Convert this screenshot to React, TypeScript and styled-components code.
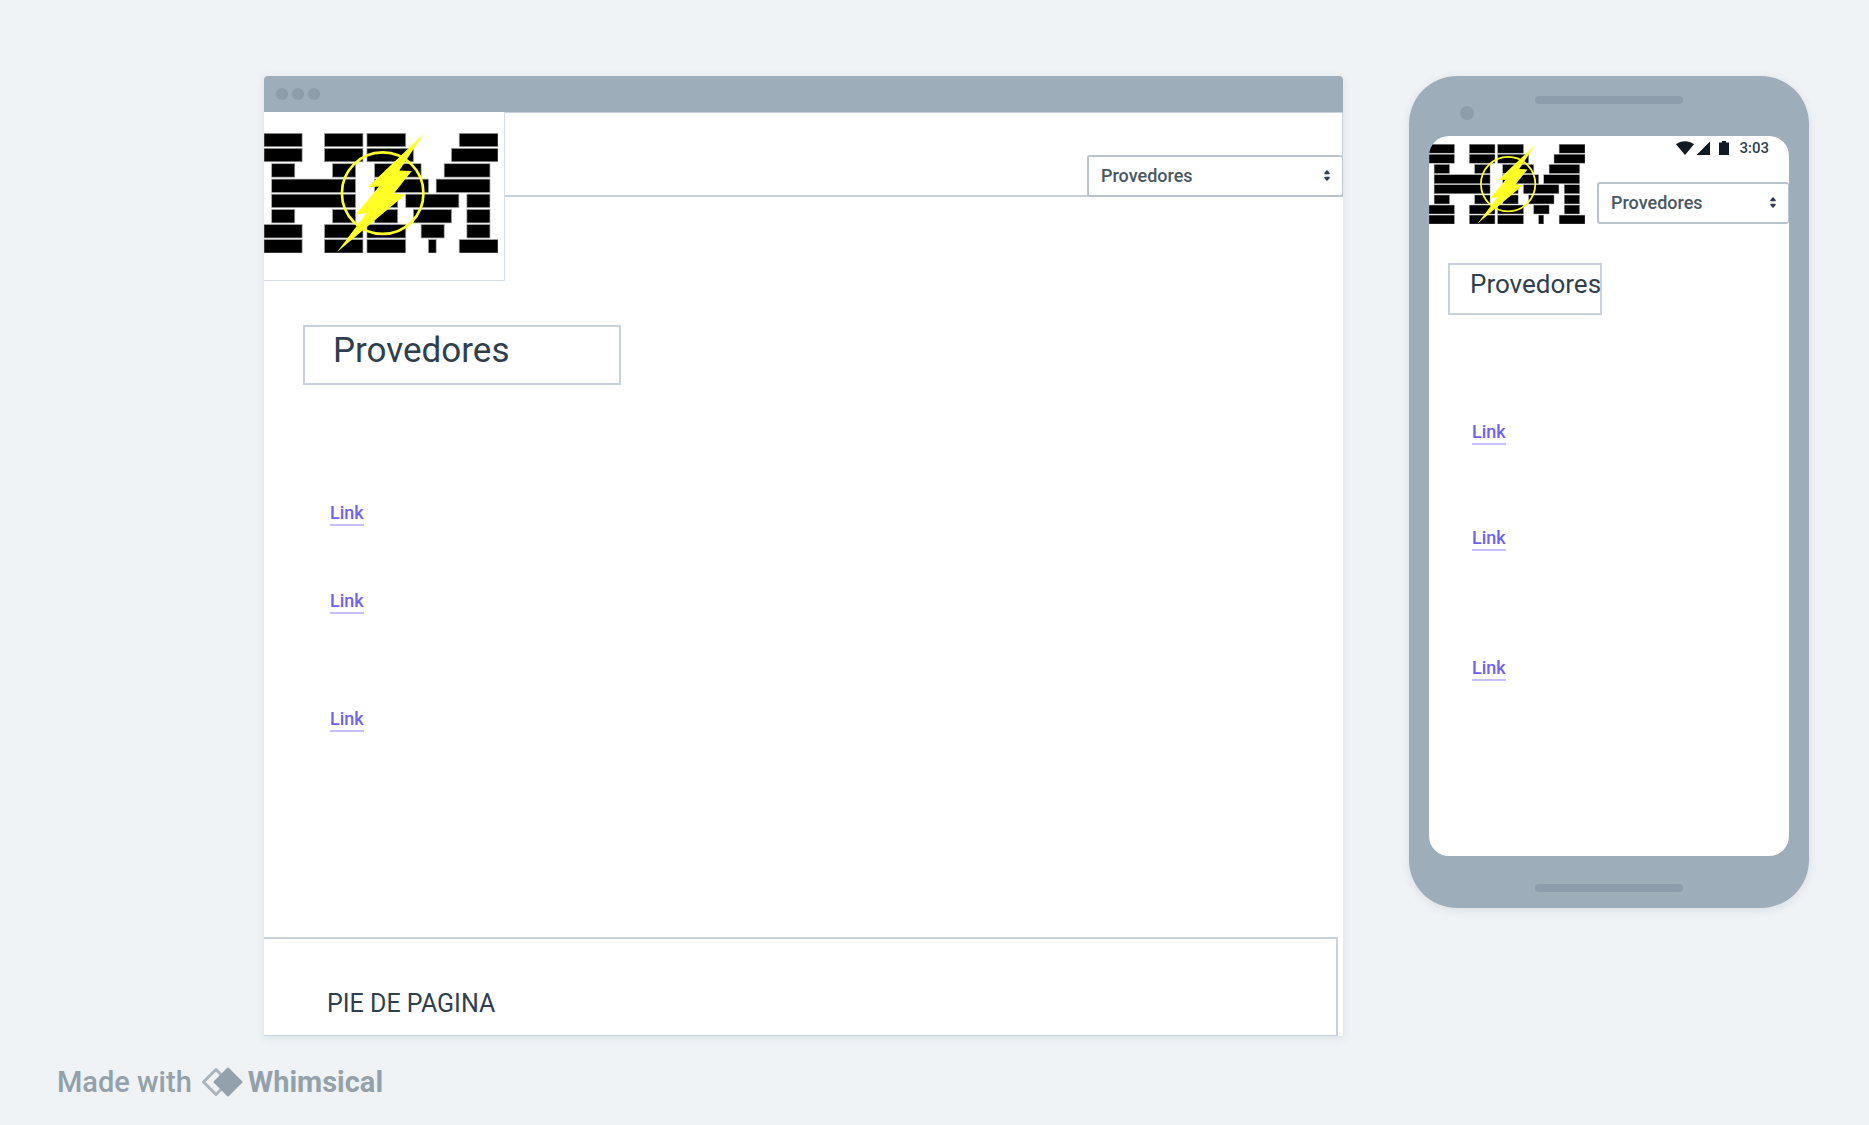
import React from "react";
import styled, { createGlobalStyle } from "styled-components";

const color = {
  canvas: "#eff3f6",
  frame: "#9eadba",
  frameDetail: "#8e9dac",
  line: "#c8d2dd",
  control: "#b8c4d0",
  ink: "#2f3f4e",
  inkSoft: "#485764",
  status: "#111a22",
  link: "#6e62ee",
  linkLine: "#c5c0fb",
  mark: "#93a1ac",
};

const GlobalStyle = createGlobalStyle`
  *, *::before, *::after { box-sizing: border-box; }
  body {
    margin: 0;
    background: ${color.canvas};
    color: ${color.ink};
    font-family: Roboto, "Liberation Sans", sans-serif;
  }
`;

const Page = styled.div`
  display: flex;
  flex-direction: column;
  min-height: 100vh;
`;

const Board = styled.main`
  display: flex;
  align-items: flex-start;
  gap: 66px;
  padding: 76px 60px 0 264px;
`;

/* Browser mock-up */

const BrowserFrame = styled.section`
  flex: 1;
  min-width: 0;
  background: #fff;
  border-radius: 4px 4px 0 0;
  overflow: hidden;
  box-shadow: 0 2px 10px rgba(60, 80, 100, 0.1);
`;

const TitleBar = styled.div`
  display: flex;
  align-items: center;
  gap: 4px;
  height: 36px;
  padding: 0 12px;
  background: ${color.frame};
`;

const Dot = styled.span<{ $size: number }>`
  display: block;
  width: ${(p) => p.$size}px;
  height: ${(p) => p.$size}px;
  border-radius: 50%;
  background: ${color.frameDetail};
`;

const SiteHeader = styled.header`
  display: flex;
  align-items: flex-start;
`;

const LogoBox = styled.div`
  width: 241px;
  height: 169px;
  padding-top: 21px;
  border: solid #d6dde5;
  border-width: 0 1px 1px 0;
`;

const NavStrip = styled.div`
  flex: 1;
  display: flex;
  align-items: flex-end;
  justify-content: flex-end;
  height: 85px;
  box-shadow: inset -1px 1px 0 ${color.line}, inset 0 -2px 0 ${color.line};
`;

const Logo = styled.svg<{ $width: number }>`
  display: block;
  width: ${(p) => p.$width}px;
  height: auto;
`;

const Field = styled.div<{ $width: number }>`
  position: relative;
  width: ${(p) => p.$width}px;
`;

const Select = styled.select`
  display: block;
  width: 100%;
  height: 42px;
  margin: 0;
  padding: 0 32px 0 12px;
  appearance: none;
  border: 2px solid ${color.control};
  border-right-width: 1px;
  border-radius: 3px;
  background: #fff;
  color: ${color.inkSoft};
  font: 500 18px/24px Roboto, "Liberation Sans", sans-serif;
`;

const Caret = styled.svg`
  position: absolute;
  top: 15px;
  right: 13px;
  width: 6px;
  height: 11px;
  pointer-events: none;
`;

const Heading = styled.h1<{ $compact?: boolean }>`
  width: ${(p) => (p.$compact ? 154 : 318)}px;
  height: ${(p) => (p.$compact ? 52 : 60)}px;
  margin: 0;
  padding-left: ${(p) => (p.$compact ? 20 : 28)}px;
  border: 2px solid ${color.line};
  font-size: ${(p) => (p.$compact ? 26 : 35)}px;
  line-height: ${(p) => (p.$compact ? 38 : 48)}px;
  font-weight: 400;
  white-space: nowrap;
`;

const BrowserBody = styled.div`
  padding: 44px 39px 205px;
`;

const LinkList = styled.nav<{ $compact?: boolean }>`
  display: flex;
  flex-direction: column;
  align-items: flex-start;
  padding: ${(p) => (p.$compact ? "106px 0 0 24px" : "117px 0 0 27px")};
`;

const Link = styled.a<{ $gap?: number }>`
  margin-top: ${(p) => p.$gap ?? 0}px;
  border-bottom: 2px solid ${color.linkLine};
  color: ${color.link};
  font-size: 18px;
  line-height: 22px;
  font-weight: 500;
  text-decoration: none;
`;

const SiteFooter = styled.footer`
  height: 99px;
  margin-right: 5px;
  padding: 49px 63px 0;
  border: solid ${color.line};
  border-width: 2px 2px 1px 0;
  font-size: 25px;
  line-height: 32px;
`;

/* Phone mock-up */

const PhoneFrame = styled.section`
  flex: none;
  width: 400px;
  padding: 0 20px;
  border-radius: 48px;
  background: ${color.frame};
  box-shadow: 0 2px 10px rgba(60, 80, 100, 0.12);
`;

const PhoneTop = styled.div`
  display: grid;
  grid-template-columns: 1fr 148px 1fr;
  align-items: start;
  height: 60px;
  padding-top: 20px;
`;

const CameraSlot = styled.div`
  padding: 10px 0 0 31px;
`;

const Speaker = styled.div`
  width: 148px;
  height: 8px;
  border-radius: 4px;
  background: ${color.frameDetail};
`;

const PhoneBottom = styled.div`
  display: flex;
  justify-content: center;
  height: 52px;
  padding-top: 28px;
`;

const Screen = styled.div`
  min-height: 720px;
  overflow: hidden;
  border-radius: 20px;
  background: #fff;
`;

const PhoneHeader = styled.header`
  display: flex;
  align-items: flex-end;
  justify-content: space-between;
`;

const PhoneTools = styled.div`
  display: flex;
  flex-direction: column;
`;

const StatusBar = styled.div`
  display: flex;
  align-items: center;
  justify-content: flex-end;
  height: 24px;
  margin-bottom: 22px;
  padding-right: 20px;
  color: ${color.ink};
  font-size: 15px;
  line-height: 24px;
  font-weight: 500;
`;

const StatusIcons = styled.svg`
  display: block;
  width: 53px;
  height: 14px;
  margin-right: 10px;
`;

const PhoneBody = styled.div`
  padding: 39px 19px;
`;

/* Credit line */

const Credit = styled.footer`
  display: flex;
  align-items: center;
  gap: 9px;
  padding: 29px 57px;
  color: ${color.mark};
  font-size: 29px;
  line-height: 34px;
  font-weight: 500;
`;

const Brand = styled.span`
  display: flex;
  align-items: center;
  gap: 5px;
  font-weight: 700;
`;

const BrandMark = styled.svg`
  display: block;
  width: 42px;
  height: 30px;
`;

const logoRows: { y: number; bars: [number, number][] }[] = [
  { y: 0, bars: [[0, 114], [181, 296], [308, 424], [584, 700]] },
  { y: 45, bars: [[0, 114], [181, 296], [308, 447], [561, 700]] },
  { y: 91, bars: [[23, 92], [205, 274], [331, 470], [539, 676]] },
  { y: 137, bars: [[23, 274], [331, 492], [515, 676]] },
  { y: 182, bars: [[23, 274], [331, 400], [424, 583], [607, 676]] },
  { y: 228, bars: [[23, 92], [205, 274], [331, 400], [447, 561], [607, 676]] },
  { y: 273, bars: [[0, 114], [181, 296], [308, 424], [470, 539], [607, 676]] },
  { y: 318, bars: [[0, 114], [181, 296], [308, 424], [492, 515], [584, 700]] },
];

function HmLogo({ width }: { width: number }) {
  return (
    <Logo $width={width} viewBox="0 0 700 360" role="img" aria-label="HM">
      {logoRows.map((row) =>
        row.bars.map(([from, to]) => (
          <rect
            key={`${row.y}-${from}`}
            x={from}
            y={row.y + 1}
            width={to - from}
            height={40}
            fill="#000"
            stroke="#a0a0a0"
            strokeWidth={2}
          />
        ))
      )}
      <circle cx="355" cy="180" r="122" fill="none" stroke="#ffff26" strokeWidth="8" />
      <path
        d="M478 2 L310 162 L344 160 L274 244 L307 239 L218 357 L423 184 L388 182 L442 114 L405 112 Z"
        fill="#ffff26"
      />
    </Logo>
  );
}

function ProviderSelect({ id, width }: { id: string; width: number }) {
  return (
    <Field $width={width}>
      <Select id={id} aria-label="Provedores" defaultValue="Provedores">
        <option>Provedores</option>
      </Select>
      <Caret viewBox="0 0 6 11" aria-hidden="true">
        <path
          d="M3 1 L5 3.5 H1 Z M3 10 L5 7.5 H1 Z"
          fill={color.ink}
          stroke={color.ink}
          strokeWidth="1.6"
          strokeLinejoin="round"
        />
      </Caret>
    </Field>
  );
}

export default function App() {
  return (
    <Page>
      <GlobalStyle />
      <Board>
        <BrowserFrame>
          <TitleBar>
            <Dot $size={12} />
            <Dot $size={12} />
            <Dot $size={12} />
          </TitleBar>
          <SiteHeader>
            <LogoBox>
              <HmLogo width={234} />
            </LogoBox>
            <NavStrip>
              <ProviderSelect id="site-section" width={256} />
            </NavStrip>
          </SiteHeader>
          <BrowserBody>
            <Heading>Provedores</Heading>
            <LinkList>
              <Link href="#1">Link</Link>
              <Link href="#2" $gap={64}>Link</Link>
              <Link href="#3" $gap={94}>Link</Link>
            </LinkList>
          </BrowserBody>
          <SiteFooter>PIE DE PAGINA</SiteFooter>
        </BrowserFrame>

        <PhoneFrame>
          <PhoneTop>
            <CameraSlot>
              <Dot $size={14} />
            </CameraSlot>
            <Speaker />
          </PhoneTop>
          <Screen>
            <PhoneHeader>
              <HmLogo width={156} />
              <PhoneTools>
                <StatusBar>
                  <StatusIcons viewBox="0 0 53 14" aria-hidden="true">
                    <path
                      d="M0 3.2 C5 -0.8 13 -0.8 18 3.2 L9 14 Z M34 0.5 V14 H20.5 Z M43 1.5 H46 V0 H50 V1.5 H53 V14 H43 Z"
                      fill={color.status}
                    />
                  </StatusIcons>
                  <span>3:03</span>
                </StatusBar>
                <ProviderSelect id="phone-section" width={192} />
              </PhoneTools>
            </PhoneHeader>
            <PhoneBody>
              <Heading as="h2" $compact>Provedores</Heading>
              <LinkList $compact>
                <Link href="#1">Link</Link>
                <Link href="#2" $gap={82}>Link</Link>
                <Link href="#3" $gap={106}>Link</Link>
              </LinkList>
            </PhoneBody>
          </Screen>
          <PhoneBottom>
            <Speaker />
          </PhoneBottom>
        </PhoneFrame>
      </Board>
      <Credit>
        <span>Made with</span>
        <Brand>
          <BrandMark viewBox="0 0 42 30" aria-hidden="true">
            <path
              d="M15 2.5 L27.5 15 L15 27.5 L2.5 15 Z"
              fill="none"
              stroke="#a9b5be"
              strokeWidth="3"
              strokeLinejoin="round"
            />
            <path
              d="M27 1.5 L40.5 15 L27 28.5 L13.5 15 Z"
              fill={color.mark}
              stroke={color.mark}
              strokeWidth="2"
              strokeLinejoin="round"
            />
          </BrandMark>
          Whimsical
        </Brand>
      </Credit>
    </Page>
  );
}
